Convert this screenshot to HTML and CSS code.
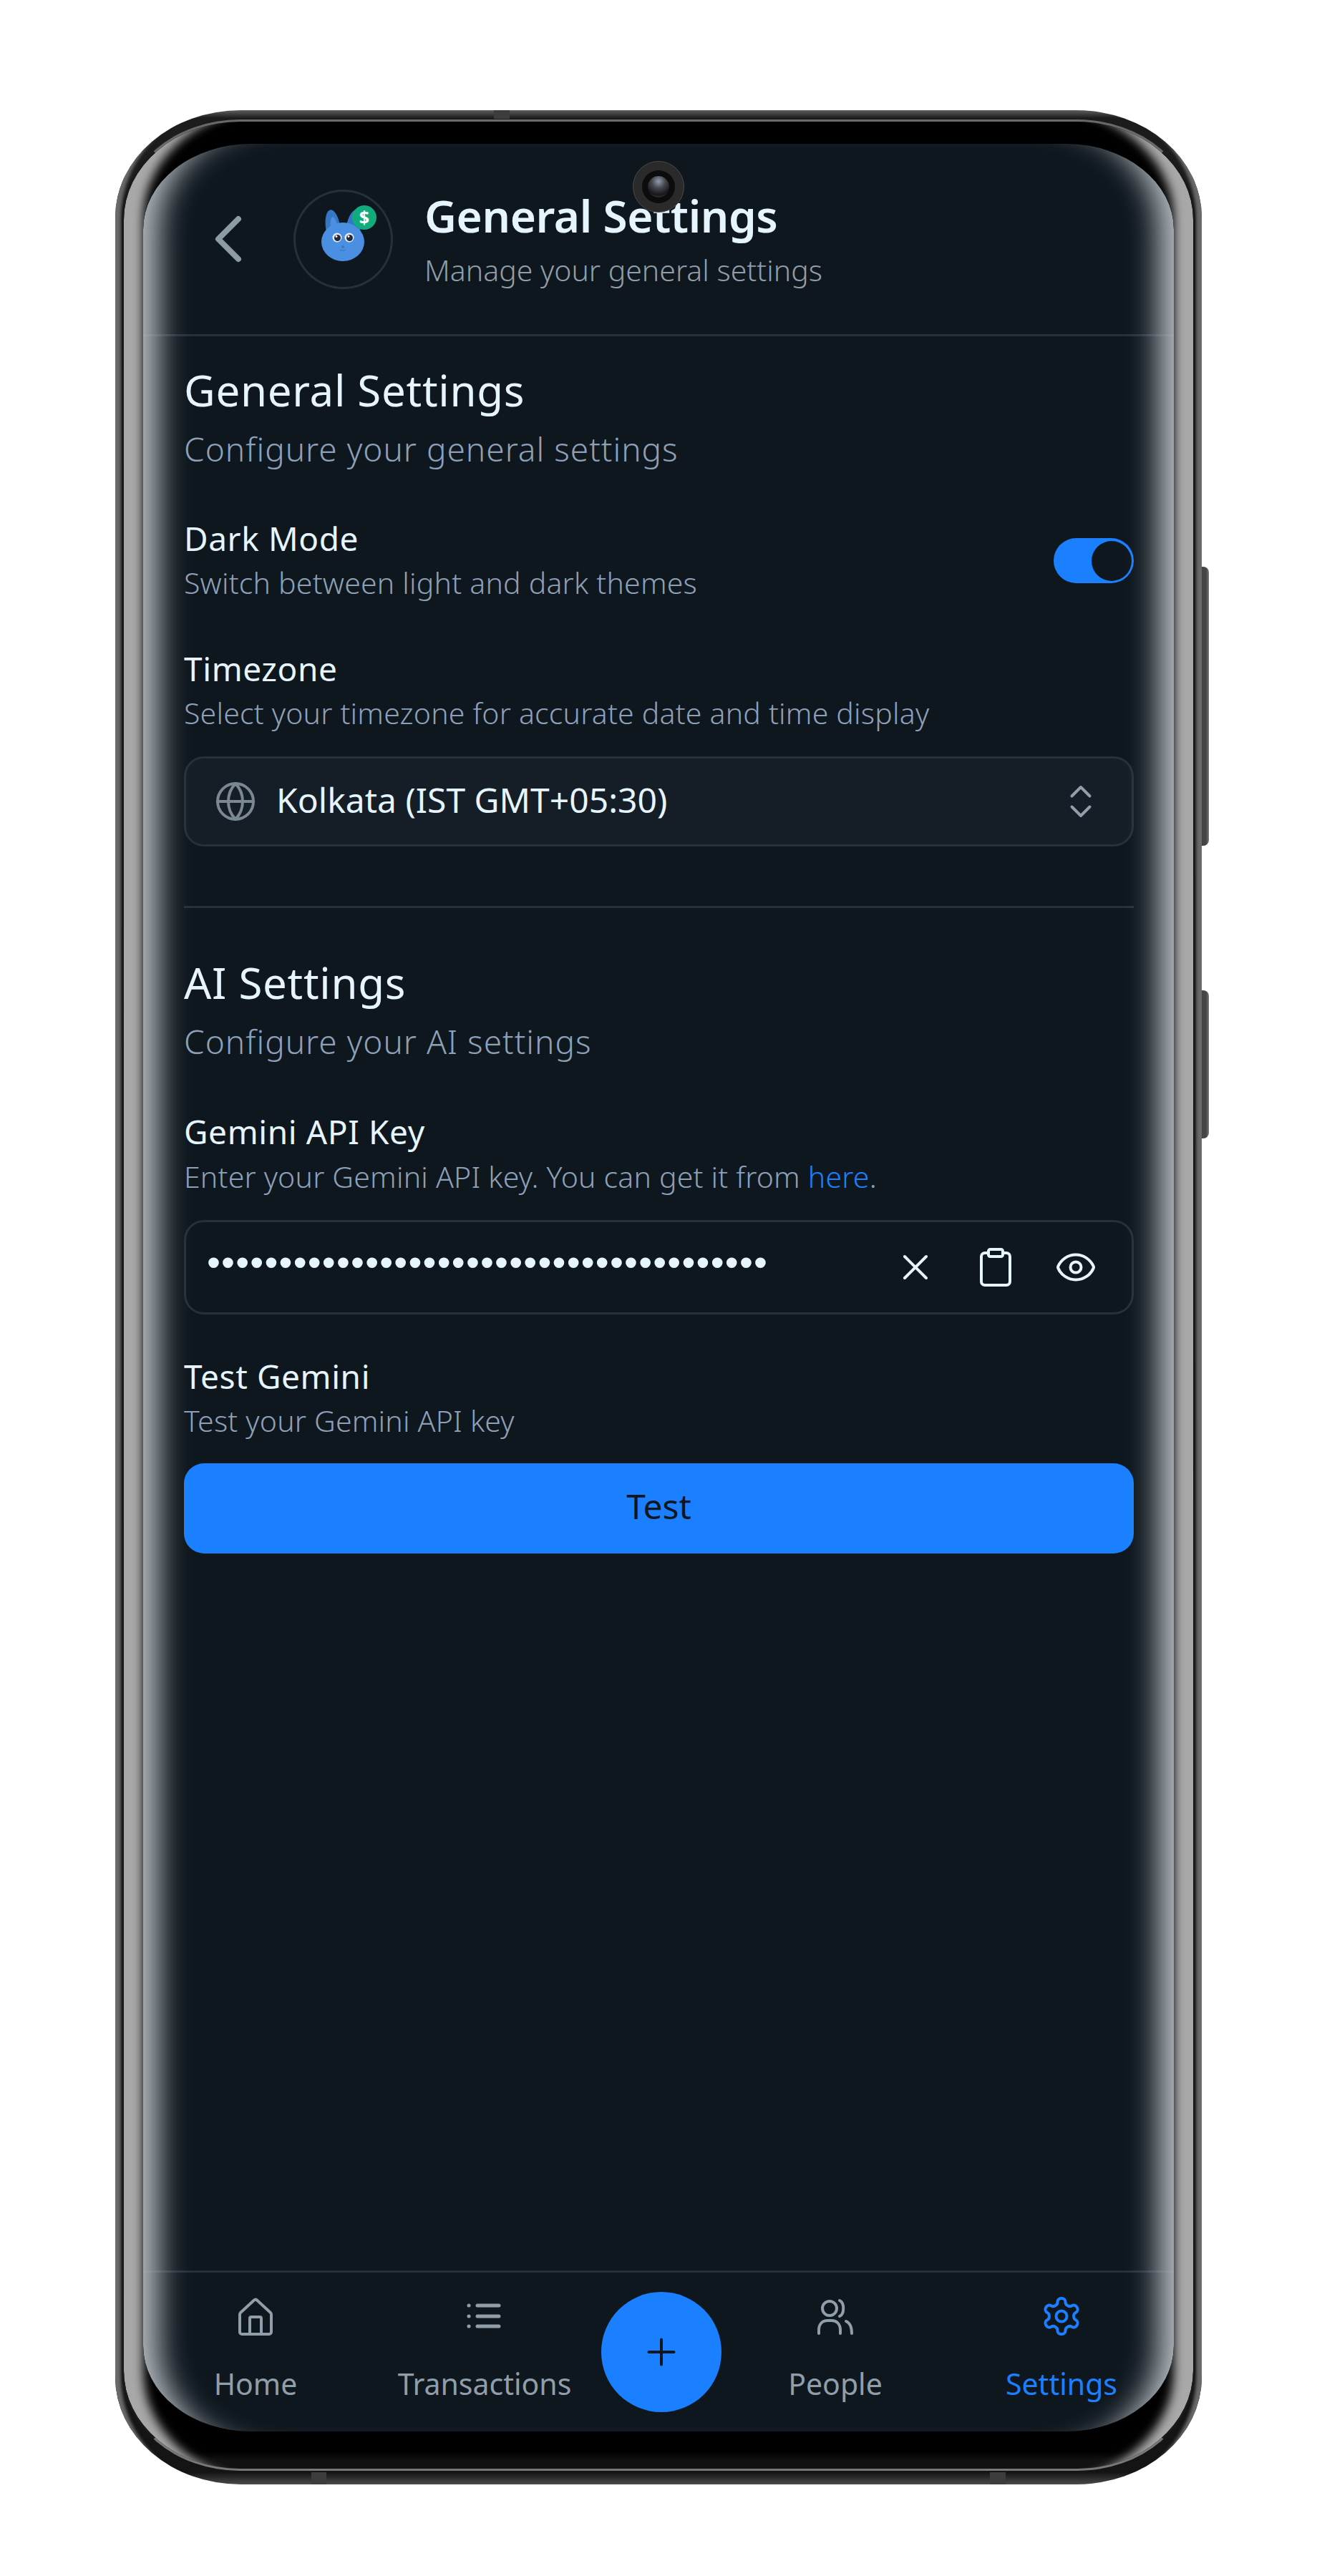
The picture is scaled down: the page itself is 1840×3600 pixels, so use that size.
FILE: index.html
```html
<!DOCTYPE html>
<html lang="en">

<head>
    <meta charset="UTF-8" />
    <meta name="viewport" content="width=device-width, initial-scale=1.0" />
    <title>General Settings</title>
    <link rel="stylesheet" href="styles.css">
</head>

<body>
    <div class="phone">
        <span class="side-btn side-btn-power"></span>
        <span class="side-btn side-btn-volume"></span>
        <span class="band band-top"></span>
        <span class="band band-bottom-left"></span>
        <span class="band band-bottom-right"></span>
        <div class="camera"><span class="lens"></span></div>

        <div class="bezel">
            <div class="screen">
                <header class="top-bar">
                    <svg class="back" viewBox="0 0 38 66">
                        <path d="M33 5 5 33l28 28" />
                    </svg>
                    <div class="avatar">
                        <svg viewBox="0 0 139 139" width="139" height="139">
                            <ellipse cx="55" cy="52" rx="10" ry="24" transform="rotate(-8 55 52)" fill="#3577c4" />
                            <ellipse cx="57" cy="55" rx="5" ry="17" transform="rotate(-8 57 55)" fill="#4a8fe0" />
                            <ellipse cx="84" cy="52" rx="10" ry="24" transform="rotate(10 84 52)" fill="#3577c4" />
                            <ellipse cx="69" cy="73" rx="30" ry="27" fill="#4a8fe2" />
                            <circle cx="61" cy="67" r="6.5" fill="#e8eef6" />
                            <circle cx="78" cy="67" r="6.5" fill="#e8eef6" />
                            <circle cx="61.5" cy="67.5" r="4.5" fill="#222a3c" />
                            <circle cx="78.5" cy="67.5" r="4.5" fill="#222a3c" />
                            <circle cx="60" cy="65.5" r="1.4" fill="#fff" />
                            <circle cx="77" cy="65.5" r="1.4" fill="#fff" />
                            <circle cx="69" cy="80" r="2" fill="#3a78c2" />
                            <path d="M65 84q4 2.500 8 0" fill="none" stroke="#3a78c2" stroke-width="1.200" />
                            <circle cx="99" cy="39" r="17" fill="#12ab7d" />
                            <text x="99" y="48" class="dollar">$</text>
                        </svg>
                    </div>
                    <div class="top-text">
                        <h1>General Settings</h1>
                        <p>Manage your general settings</p>
                    </div>
                </header>

                <main class="content">
                    <h2 class="section-title">General Settings</h2>
                    <p class="section-desc">Configure your general settings</p>

                    <div class="row row-dark">
                        <div>
                            <div class="label">Dark Mode</div>
                            <div class="hint">Switch between light and dark themes</div>
                        </div>
                        <div class="toggle"><span class="knob"></span></div>
                    </div>

                    <div class="label label-timezone">Timezone</div>
                    <div class="hint hint-timezone">Select your timezone for accurate date and time display</div>
                    <div class="select">
                        <svg class="icon globe" viewBox="0 0 24 24">
                            <circle cx="12" cy="12" r="10" />
                            <path d="M12 2a14.500 14.500 0 0 0 0 20 14.500 14.500 0 0 0 0-20" />
                            <path d="M2 12h20" />
                        </svg>
                        <span class="select-value">Kolkata (IST GMT+05:30)</span>
                        <svg class="icon updown" viewBox="0 0 24 24">
                            <path d="m7 15 5 5 5-5" />
                            <path d="m7 9 5-5 5 5" />
                        </svg>
                    </div>

                    <hr class="divider" />

                    <h2 class="section-title">AI Settings</h2>
                    <p class="section-desc">Configure your AI settings</p>

                    <div class="label label-gemini">Gemini API Key</div>
                    <div class="hint hint-gemini">Enter your Gemini API key. You can get it from <a href="#">here</a>.</div>
                    <div class="key-input">
                        <span class="dots">•••••••••••••••••••••••••••••••••••••••</span>
                        <div class="key-actions">
                            <svg class="icon" viewBox="0 0 24 24">
                                <path d="M18 6 6 18" />
                                <path d="m6 6 12 12" />
                            </svg>
                            <svg class="icon" viewBox="0 0 24 24">
                                <rect x="8" y="2" width="8" height="4" rx="1" />
                                <path d="M16 4h2a2 2 0 0 1 2 2v14a2 2 0 0 1-2 2H6a2 2 0 0 1-2-2V6a2 2 0 0 1 2-2h2" />
                            </svg>
                            <svg class="icon" viewBox="0 0 24 24">
                                <path d="M2.062 12.348a1 1 0 0 1 0-.696 10.750 10.750 0 0 1 19.876 0 1 1 0 0 1 0 .696 10.750 10.750 0 0 1-19.876 0" />
                                <circle cx="12" cy="12" r="3" />
                            </svg>
                        </div>
                    </div>

                    <div class="label label-test">Test Gemini</div>
                    <div class="hint hint-test">Test your Gemini API key</div>
                    <button class="test-btn">Test</button>
                </main>

                <nav class="tabs">
                    <div class="tab">
                        <svg class="tab-icon" viewBox="0 0 60 60">
                            <path d="M8 28a4 4 0 0 1 1-3L28 7.500a3 3 0 0 1 4 0L51 25a4 4 0 0 1 1 3v24a3 3 0 0 1-3 3H11a3 3 0 0 1-3-3z" />
                            <path d="M22 55V33a2 2 0 0 1 2-2h12a2 2 0 0 1 2 2v22" />
                        </svg>
                        <span>Home</span>
                    </div>
                    <div class="tab">
                        <svg class="tab-icon tab-icon-list" viewBox="0 0 60 60">
                            <path d="M20 15h30M20 30h30M20 44h30" />
                            <path class="list-dot" d="M8 15h.1M8 30h.1M8 44h.1" />
                        </svg>
                        <span>Transactions</span>
                    </div>
                    <button class="fab">
                        <svg class="icon" viewBox="0 0 24 24">
                            <path d="M5 12h14" />
                            <path d="M12 5v14" />
                        </svg>
                    </button>
                    <div class="tab">
                        <svg class="tab-icon" viewBox="3 0 60 60">
                            <circle cx="25" cy="19" r="10" />
                            <path d="M39 8c7 3 7 19 0 22" />
                            <path d="M10 54v-5c0-8 5-13 12-13h6c7 0 12 5 12 13v5" />
                            <path d="M48 37c5 2 8 7 8 17" />
                        </svg>
                        <span>People</span>
                    </div>
                    <div class="tab tab-active">
                        <svg class="tab-icon" viewBox="0 0 24 24">
                            <path d="M12.220 2h-.44a2 2 0 0 0-2 2v.18a2 2 0 0 1-1 1.730l-.43.25a2 2 0 0 1-2 0l-.15-.08a2 2 0 0 0-2.730.73l-.22.38a2 2 0 0 0 .73 2.730l.15.1a2 2 0 0 1 1 1.720v.51a2 2 0 0 1-1 1.740l-.15.09a2 2 0 0 0-.73 2.730l.22.38a2 2 0 0 0 2.730.73l.15-.08a2 2 0 0 1 2 0l.43.25a2 2 0 0 1 1 1.730V20a2 2 0 0 0 2 2h.44a2 2 0 0 0 2-2v-.18a2 2 0 0 1 1-1.730l.43-.25a2 2 0 0 1 2 0l.15.08a2 2 0 0 0 2.730-.73l.22-.39a2 2 0 0 0-.73-2.730l-.15-.08a2 2 0 0 1-1-1.740v-.5a2 2 0 0 1 1-1.740l.15-.09a2 2 0 0 0 .73-2.730l-.22-.38a2 2 0 0 0-2.730-.73l-.15.08a2 2 0 0 1-2 0l-.43-.25a2 2 0 0 1-1-1.730V4a2 2 0 0 0-2-2z" />
                            <circle cx="12" cy="12" r="3" />
                        </svg>
                        <span>Settings</span>
                    </div>
                </nav>
            </div>
        </div>
    </div>
</body>

</html>
```

FILE: styles.css
```css
* {
    box-sizing: border-box;
}

body {
    margin: 0;
    height: 3600px;
    background-color: #fff;
    font-family: "Noto Sans", "Open Sans", sans-serif;
    padding: 154px 0 0 161px;
}

h1,
h2,
p {
    margin: 0;
    font-weight: 400;
}

/* phone frame */
.phone {
    position: relative;
    width: 1518px;
    height: 3318px;
    padding: 13px 9px 19px 9px;
    border-radius: 175px / 150px;
    background: linear-gradient(#5e5e5e, #1c1c1c 11px, #141414 calc(100% - 17px), #4a4a4a);
    box-shadow: inset 28px 0 4px -20px #6a6a6a, inset -28px 0 4px -20px #6a6a6a;
}

.bezel {
    height: 100%;
    padding: 31px 27px 52px 27px;
    border: 3px solid;
    border-color: #6a6a6a #1a1a1a #787878 #1a1a1a;
    border-radius: 165px / 140px;
    background: linear-gradient(#000 0, #000 calc(100% - 24px), #111 calc(100% - 12px));
    box-shadow: inset 47px 0 14px -20px #a8a8a8, inset -47px 0 14px -20px #a8a8a8;
}

.side-btn {
    position: absolute;
    left: 100%;
    width: 10px;
    border-radius: 0 8px 8px 0;
    background: linear-gradient(to right, #454545 60%, #777);
}

.side-btn-power {
    top: 638px;
    height: 390px;
}

.side-btn-volume {
    top: 1230px;
    height: 207px;
}

.band {
    position: absolute;
    background-color: #3d3d3d;
}

.band-top {
    top: 0;
    left: 529px;
    width: 22px;
    height: 12px;
}

.band-bottom-left {
    bottom: 0;
    left: 274px;
    width: 21px;
    height: 17px;
}

.band-bottom-right {
    bottom: 0;
    left: 1222px;
    width: 22px;
    height: 17px;
}

.camera {
    position: absolute;
    z-index: 3;
    top: 71px;
    left: 723px;
    display: flex;
    width: 72px;
    height: 72px;
    justify-content: center;
    align-items: center;
    border: 1px solid #4a4a4a;
    border-radius: 50%;
    background-color: #2a2a2a;
}

.lens {
    width: 46px;
    height: 46px;
    border: 8px solid #0c0c0c;
    border-radius: 50%;
    background: radial-gradient(circle at 50% 25%, #8f9bb0 0, #46464e 35%, #17171a 70%, #555 100%);
}

/* screen */
.screen {
    position: relative;
    display: flex;
    height: 100%;
    flex-direction: column;
    overflow: hidden;
    border-radius: 150px / 120px;
    background-color: #0f171e;
    color: #e6f4fe;
}

/* curved glass highlight, only on the long sides */
.screen::after {
    content: "";
    position: absolute;
    inset: 0;
    border-radius: inherit;
    box-shadow: inset 62px 0 40px -40px #b5bcc1, inset -62px 0 40px -40px #b5bcc1;
    pointer-events: none;
}

.top-bar {
    display: flex;
    height: 269px;
    flex-shrink: 0;
    align-items: center;
    padding-left: 100px;
    border-bottom: 3px solid #26303a;
}

.back {
    width: 38px;
    height: 66px;
    fill: none;
    stroke: #8d9ba4;
    stroke-width: 8;
    stroke-linecap: round;
    stroke-linejoin: round;
}

.avatar {
    width: 139px;
    height: 139px;
    margin-left: 72px;
    border-radius: 50%;
    box-shadow: inset 0 0 0 3px #26303a;
}

.dollar {
    font-family: "Noto Sans", sans-serif;
    font-size: 25px;
    font-weight: 700;
    text-anchor: middle;
    fill: #fff;
}

.top-text {
    margin-left: 44px;
}

.top-text h1 {
    font-size: 62px;
    font-weight: 600;
    line-height: 74px;
    letter-spacing: -.4px;
}

.top-text p {
    margin-top: 11px;
    font-size: 41px;
    font-weight: 300;
    line-height: 56px;
    color: #8f9ea8;
}

/* settings */
.content {
    flex: 1;
    padding: 40px 56px 0 57px;
}

.section-title {
    font-size: 60px;
    line-height: 70px;
    letter-spacing: .7px;
}

.section-desc {
    margin-top: 17px;
    font-size: 46px;
    font-weight: 300;
    line-height: 60px;
    letter-spacing: 1px;
    color: #8ea0b8;
}

.label {
    font-size: 46px;
    line-height: 58px;
    letter-spacing: .6px;
}

.hint {
    font-size: 41px;
    font-weight: 300;
    line-height: 56px;
    letter-spacing: .2px;
    color: #8ea0b8;
}

.hint a {
    color: #1a80ff;
    text-decoration: none;
}

.row {
    display: flex;
    justify-content: space-between;
    align-items: center;
}

.row-dark {
    margin-top: 66px;
}

.row-dark .hint {
    margin-top: 5px;
}

.label-timezone {
    margin-top: 63px;
}

.hint-timezone {
    margin-top: 5px;
}

.toggle {
    display: flex;
    width: 112px;
    height: 63px;
    margin-top: 2px;
    justify-content: flex-end;
    align-items: center;
    padding-right: 3px;
    border-radius: 32px;
    background-color: #1a80ff;
}

.knob {
    width: 56px;
    height: 56px;
    border-radius: 50%;
    background-color: #0f171e;
}

.icon {
    width: 60px;
    height: 60px;
    fill: none;
    stroke: #e6f4fe;
    stroke-width: 1.600;
    stroke-linecap: round;
    stroke-linejoin: round;
}

.select {
    display: flex;
    height: 126px;
    margin-top: 33px;
    align-items: center;
    padding: 0 41px 0 39px;
    border: 3px solid #26303a;
    border-radius: 28px;
    background-color: #151e26;
}

.globe {
    stroke: #7a8892;
}

.select-value {
    flex: 1;
    margin: -6px 0 0 27px;
    font-size: 48px;
}

.updown {
    stroke: #8f9ea8;
}

.divider {
    height: 3px;
    margin: 83px 0 69px;
    border: 0;
    background-color: #26303a;
}

.label-gemini {
    margin-top: 67px;
}

.hint-gemini {
    margin-top: 6px;
}

.key-input {
    display: flex;
    height: 132px;
    margin-top: 33px;
    justify-content: space-between;
    align-items: center;
    padding: 0 48px 0 29px;
    border: 3px solid #26303a;
    border-radius: 28px;
}

.dots {
    margin-top: -14px;
    font-family: "Liberation Sans", sans-serif;
    font-size: 54px;
    line-height: 60px;
    letter-spacing: 1.200px;
}

.key-actions {
    display: flex;
    gap: 52px;
}

.label-test {
    margin-top: 57px;
}

.hint-test {
    margin-top: 5px;
}

.test-btn {
    display: block;
    width: 100%;
    height: 126px;
    margin-top: 32px;
    padding: 0 0 8px;
    border: 0;
    border-radius: 28px;
    background-color: #1a80ff;
    color: #0f171e;
    font-family: inherit;
    font-size: 48px;
}

/* bottom nav */
.tabs {
    display: grid;
    height: 225px;
    flex-shrink: 0;
    grid-template-columns: 314px 326px 168px 318px 314px;
    border-top: 3px solid #26303a;
}

.tab {
    display: flex;
    flex-direction: column;
    align-items: center;
    padding-top: 31px;
    font-size: 41px;
    line-height: 56px;
    color: #8f9ea8;
}

.tab span {
    margin-top: 36px;
}

.tab-icon {
    width: 60px;
    height: 60px;
    fill: none;
    stroke: currentColor;
    stroke-width: 4;
    stroke-linecap: round;
    stroke-linejoin: round;
}

.tab-active {
    color: #1a80ff;
}

.tab-active .tab-icon {
    stroke-width: 1.600;
}

.tab-icon-list {
    stroke-width: 5;
}

.fab {
    display: flex;
    width: 168px;
    height: 168px;
    margin-top: 27px;
    justify-content: center;
    align-items: center;
    padding: 0;
    border: 0;
    border-radius: 50%;
    background-color: #1a80ff;
}

.fab .icon {
    stroke: #0f171e;
}
```
